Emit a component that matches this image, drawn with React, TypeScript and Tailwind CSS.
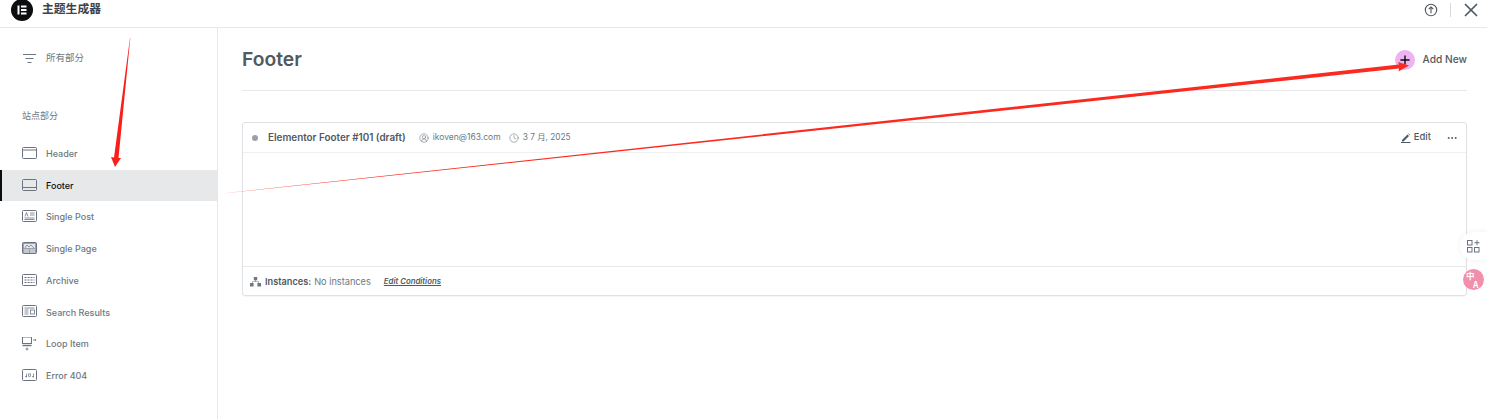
import React from "react";
import { X, Plus, MoreHorizontal, CircleUserRound, Clock } from "lucide-react";

const FONT = "font-['Inter','Noto_Sans_CJK_SC',sans-serif]";

const S = "#6b7280";

const icons: Record<string, React.ReactNode> = {
  Header: (
    <>
      <rect x="0.5" y="0.5" width="14" height="11" rx="1" fill="none" stroke={S} />
      <path d="M1 3h13" stroke={S} />
    </>
  ),
  Footer: (
    <>
      <rect x="0.5" y="0.5" width="14" height="11" rx="1" fill="none" stroke={S} />
      <path d="M1 8.5h13" stroke={S} />
    </>
  ),
  "Single Post": (
    <>
      <rect x="0.5" y="0.5" width="14" height="11" rx="1" fill="none" stroke={S} />
      <path d="M3 6.5 4.5 2.5 6 6.5M8 3h4.5M8 5h4.5M2.5 8h10M2.5 9.5h10" stroke={S} strokeWidth="0.8" fill="none" />
    </>
  ),
  "Single Page": (
    <>
      <rect x="0.5" y="0.5" width="14" height="11" rx="1" fill="#9ca3af" stroke={S} />
      <rect x="2" y="2" width="11" height="4" fill="#e5e7eb" />
      <path d="m3 6 2-3 2 2 2-2 3 3" stroke={S} strokeWidth="0.7" fill="none" />
      <path d="M2 8h5M8 8h5M2 10h5M8 10h5" stroke="#fff" strokeWidth="0.8" />
    </>
  ),
  Archive: (
    <>
      <rect x="0.5" y="0.5" width="14" height="11" rx="1" fill="none" stroke={S} />
      <path d="M2.5 3.5h10M2.5 6h10M2.5 8.5h10" stroke={S} strokeWidth="1.2" strokeDasharray="2 1" />
    </>
  ),
  "Search Results": (
    <>
      <rect x="0.5" y="0.5" width="14" height="11" rx="1" fill="none" stroke={S} />
      <path d="M2.5 3h10M2.5 5h4M2.5 7h4M2.5 9h4" stroke={S} strokeWidth="0.8" />
      <rect x="8.5" y="5" width="4" height="4" fill="none" stroke={S} strokeWidth="0.8" />
    </>
  ),
  "Loop Item": (
    <>
      <rect x="0.5" y="0" width="9" height="6.5" fill="none" stroke={S} />
      <path d="M0.5 8.5h9" stroke={S} strokeWidth="1.4" />
      <path d="M11 3h3M13 2l1 1-1 1M5 10.5v3M3.5 12h3" stroke={S} strokeWidth="0.8" fill="none" />
    </>
  ),
  "Error 404": (
    <>
      <rect x="0.5" y="0.5" width="14" height="11" rx="1" fill="none" stroke={S} />
      <path d="M3 7.5h2M4.5 4.5v4M6.5 4.8h2v2.6h-2zM10 7.5h2M11.5 4.5v4" stroke={S} strokeWidth="0.7" fill="none" />
    </>
  ),
};

const items = ["Header", "Footer", "Single Post", "Single Page", "Archive", "Search Results", "Loop Item", "Error 404"];

function NavItem({ label }: { label: string }) {
  const active = label === "Footer";
  return (
    <div
      className={`flex h-[31.7px] items-center gap-[9px] text-[9px] font-medium ${
        active ? "border-l-2 border-[#0c0d0e] bg-[#e6e8ea] pl-[20px] text-[#0c0d0e]" : "pl-[22px] text-[#6d7882]"
      }`}
    >
      <svg width="15" height="14" viewBox="0 0 15 14" className="shrink-0">
        {icons[label]}
      </svg>
      <span>{label}</span>
    </div>
  );
}

export default function App() {
  return (
    <div className={`relative flex h-[419px] w-[1487px] flex-col overflow-hidden bg-white ${FONT}`}>
      <header className="flex h-[28px] shrink-0 items-center border-b border-[#e6e8ea] pl-[11px] pr-[5px]">
        <div className="flex h-[22px] w-[22px] -translate-y-[4px] items-center justify-center rounded-full bg-[#0c0d0e]">
          <svg width="10" height="10" viewBox="0 0 10 10">
            <path d="M0.5 0.5h2v9h-2zM4 0.5h5.5v2H4zM4 4h5.5v2H4zM4 7.5h5.5v2H4z" fill="#fff" />
          </svg>
        </div>
        <div className="ml-[9px] -translate-y-[4px] text-[11.800px] font-semibold text-[#3f444b]">主题生成器</div>
        <div className="ml-auto flex -translate-y-[4px] items-center">
          <svg width="14" height="14" viewBox="0 0 14 14" fill="none" stroke="#515962" strokeWidth="1.1">
            <circle cx="7" cy="7" r="5.7" />
            <path d="M7 10.2V4.2M4.8 6 7 3.9 9.2 6" />
          </svg>
          <span className="ml-[12px] h-[14px] w-px bg-[#d5d8dc]" />
          <X size={22} strokeWidth={1.9} className="ml-[9px] text-[#515962]" />
        </div>
      </header>

      <div className="flex min-h-0 flex-1">
        <aside className="w-[218px] shrink-0 border-r border-[#e6e8ea]">
          <div className="flex h-[60px] items-center gap-[10px] pl-[23px] text-[9.500px] text-[#6d7882]">
            <svg width="13" height="9" viewBox="0 0 13 9" stroke="#6d7882" strokeWidth="1">
              <path d="M0 .5h13M2.500 4.500h8M4.500 8.500h4" />
            </svg>
            <span>所有部分</span>
          </div>
          <div className="mt-[19px] h-[27px] pl-[22px] text-[9px] leading-[17px] text-[#6d7882]">站点部分</div>
          <nav className="mt-[4px]">
            {items.map((i) => (
              <NavItem key={i} label={i} />
            ))}
          </nav>
        </aside>

        <main className="flex-1 pl-[24px] pr-[20px]">
          <div className="flex h-[63px] items-center justify-between border-b border-[#e6e8ea] pt-[1px]">
            <h1 className="text-[19.300px] font-semibold text-[#515962]">Footer</h1>
            <div className="flex items-center gap-[8px] text-[10.200px] font-medium text-[#515962]">
              <span className="flex h-[20px] w-[20px] items-center justify-center rounded-full bg-[#eeb4f2]">
                <Plus size={14} strokeWidth={2.4} className="text-[#0c0d0e]" />
              </span>
              <span>Add New</span>
            </div>
          </div>

          <section className="mt-[31px] h-[174px] rounded-[3px] border border-[#dfe1e4] shadow-[0_1px_1px_rgba(0,0,0,0.04)]">
            <div className="flex h-[30px] items-center border-b border-[#eef0f1] pl-[9px] pr-[8px] text-[#6d7882]">
              <span className="h-[6px] w-[6px] rounded-full bg-[#9aa1aa]" />
              <span className="ml-[10px] text-[9.900px] font-semibold text-[#515962]">Elementor Footer #101 (draft)</span>
              <CircleUserRound size={10} strokeWidth={1.4} className="ml-[13px]" />
              <span className="ml-[4px] text-[8.500px]">ikoven@163.com</span>
              <Clock size={10} strokeWidth={1.4} className="ml-[8px]" />
              <span className="ml-[4px] text-[8.300px]">3 7 月, 2025</span>
              <div className="ml-auto flex items-center gap-[3px] text-[9.500px] font-medium text-[#515962]">
                <svg width="10" height="10" viewBox="0 0 10 10" fill="#515962">
                  <path d="M1 7 6.500 1.500l1.500 1.500L2.500 8.500H1zM7.200 .8l.6-.4 1.300 1.300-.4.6zM0 9h9.500v1H0z" />
                </svg>
                <span>Edit</span>
              </div>
              <MoreHorizontal size={12} strokeWidth={2} className="ml-[15px] text-[#515962]" />
            </div>
            <div className="h-[113px]" />
            <div className="flex h-[29px] items-center border-t border-[#e6e8ea] pl-[7px] pt-[1px] text-[9.200px] text-[#6d7882]">
              <svg width="11" height="10" viewBox="0 0 11 10" fill="#6d7882">
                <path d="M3.800 0h3.400v3.200H3.800zM0 6h3.600v3.500H0zM7.400 6H11v3.500H7.400zM5.200 3h.6v1.500H9V6h-.6V5.100H2.600V6H2V4.500h3.200z" />
              </svg>
              <span className="ml-[4px] font-semibold text-[#515962]">Instances:</span>
              <span className="ml-[3px]">No instances</span>
              <span className="ml-[13px] text-[7.800px] font-semibold italic text-[#515962] underline">Edit Conditions</span>
            </div>
          </section>
        </main>
      </div>

      {/* floating browser-extension buttons */}
      <div className="absolute left-[1460px] top-[232px] flex h-[28px] w-[34px] items-center rounded-l-full bg-white pl-[7px] shadow-[0_0_6px_rgba(0,0,0,0.06)]">
        <svg width="13" height="13" viewBox="0 0 13 13" fill="none" stroke="#6b7280" strokeWidth="1">
          <rect x="0.500" y="0.500" width="4.500" height="4.500" />
          <rect x="0.500" y="7.500" width="4.500" height="4.500" />
          <rect x="7.500" y="7.500" width="4.500" height="4.500" />
          <path d="M7.500 2.700h5M10 0.200v5" />
        </svg>
      </div>
      <div className="absolute left-[1463px] top-[269px] flex h-[21px] w-[21px] flex-col justify-center rounded-full bg-[#f290ab] pl-[3px] font-['Noto_Sans_CJK_SC',sans-serif] text-[8.500px] font-bold leading-[8.500px] text-white">
        <span>中</span>
        <span className="pl-[7px]">A</span>
      </div>

      {/* red annotation arrows drawn over the page */}
      <svg className="pointer-events-none absolute left-0 top-0" width="1487" height="419" viewBox="0 0 1487 419">
        <polygon points="130,38 130.300,38 118.500,158 121,158 115,167 111,157 114,157.500" fill="#fb1f1a" />
        <polygon points="218,194 1399,64.500 1398,62 1409,65.500 1398.500,71.500 1399,68.500" fill="#fb2a1f" />
      </svg>
    </div>
  );
}
